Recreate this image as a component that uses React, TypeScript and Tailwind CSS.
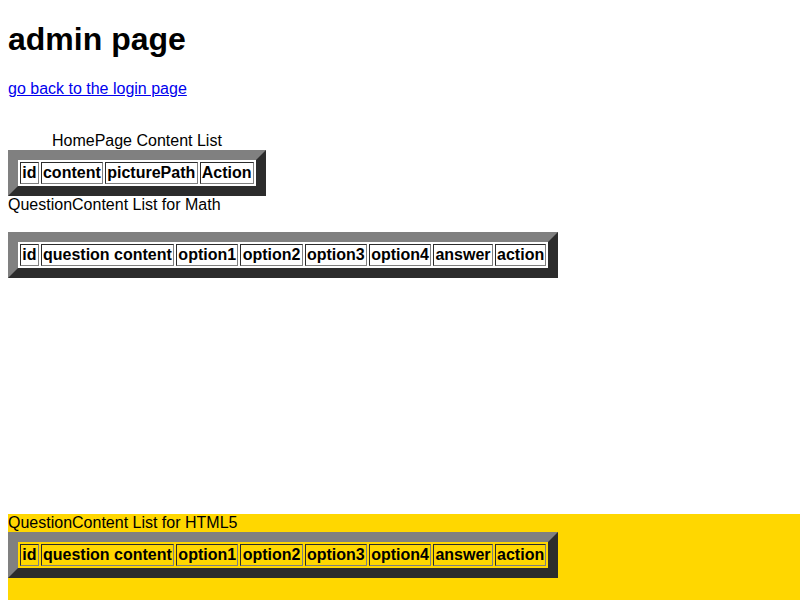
import React from "react";

const mathHeaders = ["id", "question content", "option1", "option2", "option3", "option4", "answer", "action"];
const homeHeaders = ["id", "content", "picturePath", "Action"];

function BorderTable({ headers, caption }: { headers: string[]; caption?: string }) {
  return (
    <table className="border-separate border-spacing-[2px] border-[10px] [border-style:outset] border-[#808080]">
      {caption ? <caption className="text-center font-normal leading-[18px] h-[18px]">{caption}</caption> : null}
      <tbody>
        <tr>
          {headers.map((h) => (
            <th
              key={h}
              className="border border-[#808080] [border-style:inset] py-[1px] px-[1.25px] font-bold leading-[18px] text-center whitespace-nowrap"
            >
              {h}
            </th>
          ))}
        </tr>
      </tbody>
    </table>
  );
}

export default function App() {
  return (
    <div className="h-[600px] overflow-hidden bg-white pl-2 font-['Liberation_Sans',Arial,sans-serif] text-[16px] text-black">
      <h1 className="pt-[21px] text-[32px] font-bold leading-[37px]">admin page</h1>
      <div className="mt-[22px] leading-[18px]">
        <a href="#" className="text-[#0000EE] underline">
          go back to the login page
        </a>
      </div>
      <div className="mt-[34px]">
        <BorderTable headers={homeHeaders} caption="HomePage Content List" />
      </div>
      <div className="leading-[18px]">QuestionContent List for Math</div>
      <div className="mt-[18px]">
        <BorderTable headers={mathHeaders} />
      </div>
      <div className="mt-[236px] h-[86px] bg-[#FFD700]">
        <div className="leading-[18px]">QuestionContent List for HTML5</div>
        <BorderTable headers={mathHeaders} />
      </div>
    </div>
  );
}
